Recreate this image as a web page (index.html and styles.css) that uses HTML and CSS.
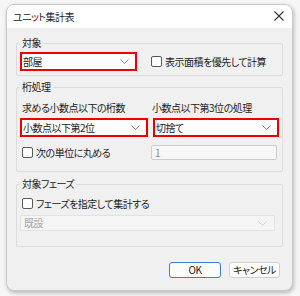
FILE: index.html
```html
<!DOCTYPE html>
<html lang="ja">
<head>
<meta charset="utf-8">
<link rel="stylesheet" href="styles.css">
</head>
<body>
<div class="window">
  <div class="titlebar">
    <span class="title">ユニット集計表</span>
    <svg class="close" width="12" height="12" viewBox="0 0 12 12"><path d="M1.5 1.5 L10.5 10.5 M10.5 1.5 L1.5 10.5" stroke="#333" stroke-width="1.1" fill="none"/></svg>
  </div>
  <div class="content">
    <fieldset class="group g1">
      <legend>対象</legend>
      <div class="row1">
        <div class="combo hl w-room"><span>部屋</span><svg class="chev" width="9" height="5" viewBox="0 0 9 5"><path d="M0.5 0.5 L4.5 4.5 L8.5 0.5" stroke="#8a8a8a" stroke-width="1" fill="none"/></svg></div>
        <label class="check"><span class="box"></span><span>表示面積を優先して計算</span></label>
      </div>
    </fieldset>
    <fieldset class="group g2">
      <legend>桁処理</legend>
      <div class="grid2">
        <div class="lbl">求める小数点以下の桁数</div>
        <div class="lbl lbl2">小数点以下第3位の処理</div>
        <div class="combo hl"><span>小数点以下第2位</span><svg class="chev" width="9" height="5" viewBox="0 0 9 5"><path d="M0.5 0.5 L4.5 4.5 L8.5 0.5" stroke="#8a8a8a" stroke-width="1" fill="none"/></svg></div>
        <div class="combo hl c2"><span>切捨て</span><svg class="chev" width="9" height="5" viewBox="0 0 9 5"><path d="M0.5 0.5 L4.5 4.5 L8.5 0.5" stroke="#8a8a8a" stroke-width="1" fill="none"/></svg></div>
        <label class="check c-round"><span class="box"></span><span>次の単位に丸める</span></label>
        <div class="input">1</div>
      </div>
    </fieldset>
    <fieldset class="group g3">
      <legend>対象フェーズ</legend>
      <label class="check c-phase"><span class="box"></span><span>フェーズを指定して集計する</span></label>
      <div class="combo disabled"><span>既設</span><svg class="chev" width="9" height="5" viewBox="0 0 9 5"><path d="M0.5 0.5 L4.5 4.5 L8.5 0.5" stroke="#cfcfcf" stroke-width="1" fill="none"/></svg></div>
    </fieldset>
    <div class="buttons">
      <button class="btn default">OK</button>
      <button class="btn">キャンセル</button>
    </div>
  </div>
</div>
</body>
</html>
```
FILE: styles.css
```css
* { box-sizing: border-box; }
html, body { margin: 0; padding: 0; }
body {
  width: 300px;
  height: 296px;
  background: #f6f6f6;
  font-family: "Noto Sans CJK JP", "Noto Sans", sans-serif;
  font-size: 10px;
  letter-spacing: -0.5px;
  font-feature-settings: "palt";
  color: #1a1a1a;
  padding: 4px 7px 0 6px;
  overflow: hidden;
}
.window {
  width: 287px;
  height: 287px;
  border: 1px solid #c9c9c9;
  border-radius: 8px;
  background: #f0f0f0;
  box-shadow: 1px 2px 4px rgba(0,0,0,0.25);
  overflow: hidden;
  display: flex;
  flex-direction: column;
}
.titlebar {
  height: 23px;
  background: #ffffff;
  display: flex;
  align-items: center;
  justify-content: space-between;
  padding: 0 7px 0 6px;
  flex: none;
}
.title { line-height: 14px; color: #1a1a1a; }
.close { display: block; margin-top: -1px; }
.content {
  padding: 0 9px 0 9px;
  display: flex;
  flex-direction: column;
}
.group {
  margin: 0;
  border: 1px solid #dcdcdc;
  border-radius: 2px;
  padding: 0 3px;
  min-width: 0;
}
.group legend {
  padding: 0 2px;
  margin-left: 0;
  line-height: 14px;
}
.g1 { margin-top: 8px; padding-top: 2px; padding-bottom: 4px; }
.g2 { margin-top: 4px; padding-top: 7px; padding-bottom: 11px; }
.g3 { margin-top: 5px; padding-top: 5px; padding-bottom: 15px; }
.row1 { display: flex; align-items: center; }
.combo {
  height: 19px;
  background: #fdfdfd;
  border: 1px solid #cfcfcf;
  border-radius: 2px;
  display: flex;
  align-items: center;
  justify-content: space-between;
  padding: 0 7px 0 2px;
  line-height: 14px;
  white-space: nowrap;
}
.combo.hl { border: 2px solid #ee0000; border-radius: 0; padding-left: 1px; padding-right: 6px; }
.w-room { width: 117px; }
.chev { display: block; flex: none; }
.check { display: flex; align-items: center; white-space: nowrap; line-height: 14px; }
.box {
  width: 11px; height: 11px;
  border: 1px solid #5a5a5a;
  border-radius: 2px;
  background: #fff;
  margin-right: 3px;
  flex: none;
}
.row1 .check { margin-left: 14px; }
.grid2 {
  display: grid;
  grid-template-columns: 128px 128px;
  column-gap: 3px;
  align-items: center;
}
.lbl { line-height: 14px; padding-left: 2px; white-space: nowrap; }
.lbl2 { padding-left: 1px; }
.grid2 .combo { margin-top: 3px; }
.grid2 .combo:not(.c2) { width: 128px; }
.c2 { margin-left: 2px; width: 126px; }
.c-round { margin-top: 8px; margin-left: 2px; height: 15px; }
.input {
  margin-top: 8px;
  width: 126px;
  height: 15px;
  background: #f7f7f7;
  border: 1px solid #cdcdcd;
  border-radius: 2px;
  color: #8a8a8a;
  padding-left: 3px;
  line-height: 13px;
}
.c-phase { margin-left: 2px; height: 15px; }
.combo.disabled {
  margin-top: 4px;
  width: 255px;
  height: 16px;
  background: #f5f5f5;
  border-color: #e2e2e2;
  color: #a8a8a8;
  padding-left: 3px;
}
.buttons {
  display: flex;
  justify-content: flex-end;
  gap: 8px;
  margin-top: 15px;
  padding-right: 3px;
}
.btn {
  font-family: "Noto Sans CJK JP", "Noto Sans", sans-serif;
  font-size: 10px;
  letter-spacing: -0.5px;
  font-feature-settings: "palt";
  height: 16px;
  padding: 0;
  line-height: 14px;
  background: #fdfdfd;
  border: 1px solid #d0d0d0;
  border-radius: 3px;
  color: #1a1a1a;
  width: 51px;
}
.btn.default { border-color: #3a82d0; width: 52px; }
```
